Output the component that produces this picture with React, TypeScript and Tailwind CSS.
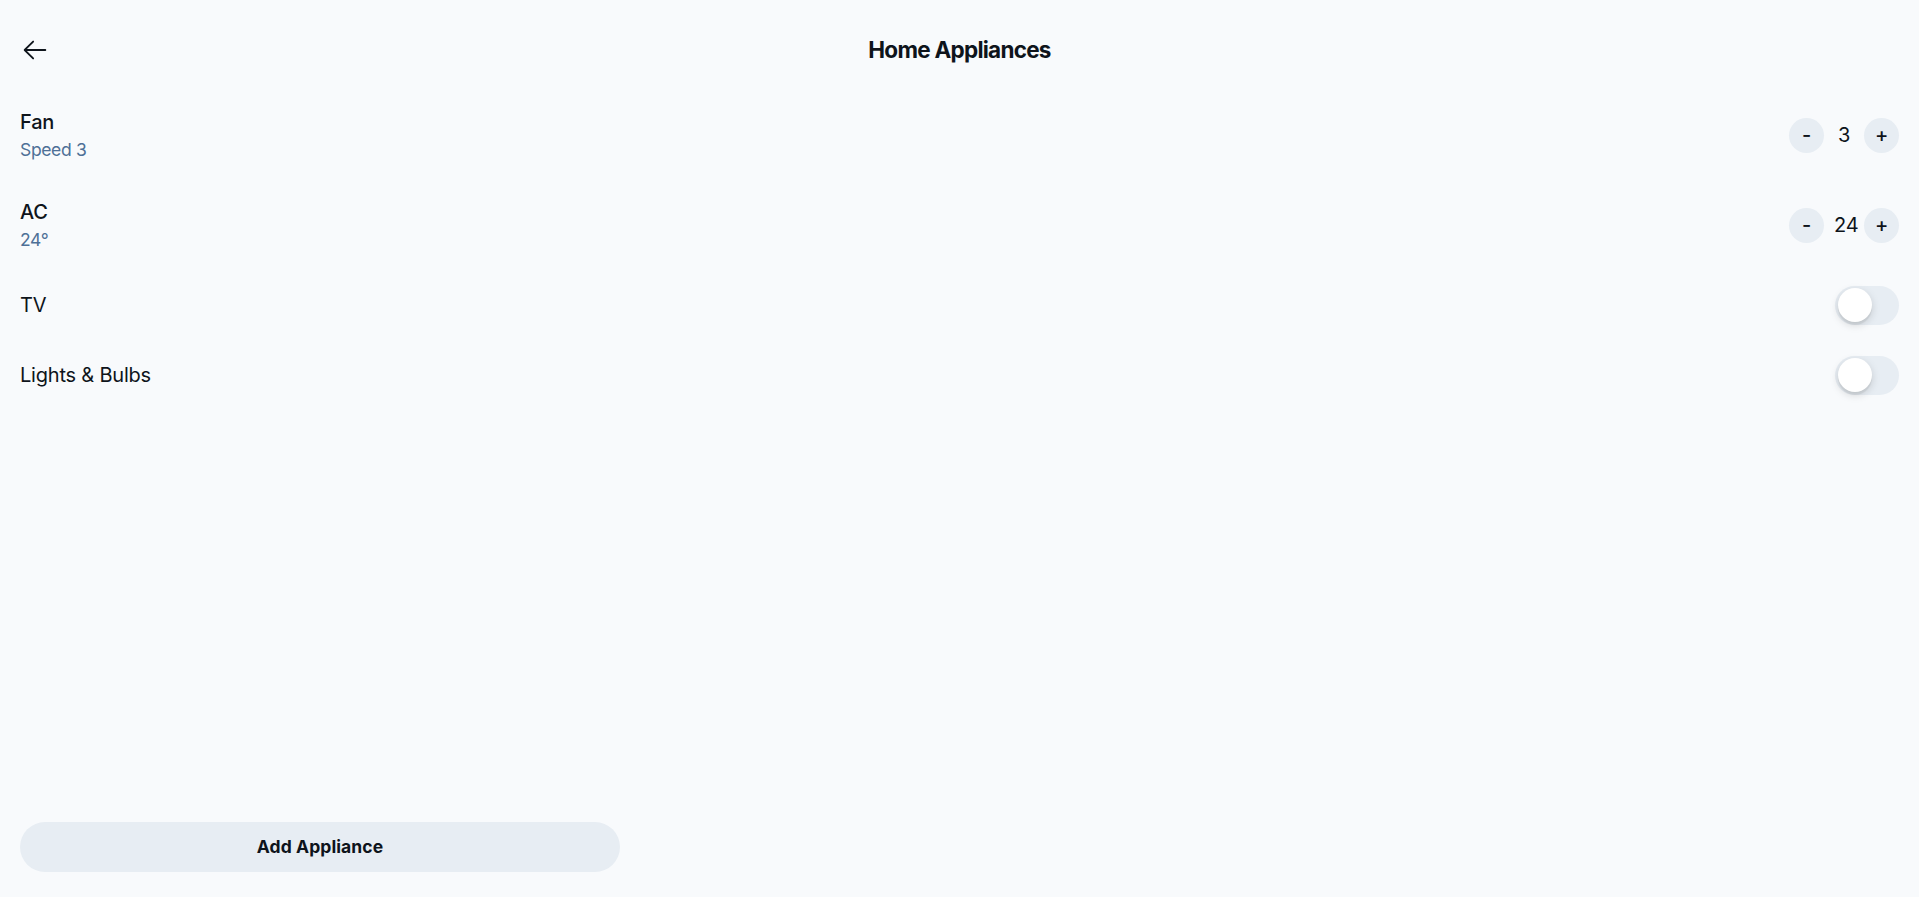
import { useState } from "react";

type Stepper = { kind: "stepper"; name: string; detail: string; value: number };
type Toggle = { kind: "toggle"; name: string; on: boolean };
type Appliance = Stepper | Toggle;

const initial: Appliance[] = [
  { kind: "stepper", name: "Fan", detail: "Speed 3", value: 3 },
  { kind: "stepper", name: "AC", detail: "24°", value: 24 },
  { kind: "toggle", name: "TV", on: false },
  { kind: "toggle", name: "Lights & Bulbs", on: false },
];

function ArrowLeft() {
  return (
    <svg width="30" height="30" viewBox="0 0 256 256" fill="currentColor">
      <path d="M224,128a8,8,0,0,1-8,8H59.31l58.35,58.34a8,8,0,0,1-11.32,11.32l-72-72a8,8,0,0,1,0-11.32l72-72a8,8,0,0,1,11.32,11.32L59.31,120H216A8,8,0,0,1,224,128Z" />
    </svg>
  );
}

function StepButton({ label, onClick }: { label: string; onClick: () => void }) {
  return (
    <button
      onClick={onClick}
      className="flex h-[35px] w-[35px] items-center justify-center rounded-full bg-[#e7edf3] text-[20px] font-medium leading-normal text-[#0e141b]"
    >
      {label}
    </button>
  );
}

function Switch({ on, onChange }: { on: boolean; onChange: () => void }) {
  return (
    <button
      onClick={onChange}
      className={`flex h-[39px] w-[64px] items-center rounded-full p-[2.5px] ${
        on ? "justify-end bg-[#1978e5]" : "justify-start bg-[#e7edf3]"
      }`}
    >
      <span className="h-full w-[34px] rounded-full bg-white shadow-[0_3px_8px_rgba(0,0,0,0.15),0_3px_1px_rgba(0,0,0,0.06)]" />
    </button>
  );
}

export default function App() {
  const [items, setItems] = useState<Appliance[]>(initial);

  const update = (i: number, fn: (a: Appliance) => Appliance) =>
    setItems((prev) => prev.map((a, j) => (j === i ? fn(a) : a)));

  return (
    <div className="flex min-h-screen flex-col justify-between bg-[#f8fafc] font-['Inter',sans-serif] tracking-[-0.013em] text-[#0e141b]">
      <div>
        <div className="flex items-center justify-between p-[20px] pb-[10px]">
          <div className="flex h-[60px] w-[60px] shrink-0 items-center text-[#0e141b]">
            <ArrowLeft />
          </div>
          <h2 className="flex-1 pr-[60px] text-center text-[22.5px] font-bold leading-tight tracking-[-0.033em]">
            Home Appliances
          </h2>
        </div>

        {items.map((a, i) =>
          a.kind === "stepper" ? (
            <div
              key={a.name}
              className="flex min-h-[90px] items-center justify-between gap-[20px] px-[20px] py-[10px]"
            >
              <div className="flex flex-col justify-center">
                <p className="text-[20px] font-medium leading-normal">{a.name}</p>
                <p className="text-[17.5px] font-normal leading-normal tracking-[-0.02em] text-[#4e7097]">
                  {a.detail}
                </p>
              </div>
              <div className="flex items-center gap-[10px]">
                <StepButton
                  label="-"
                  onClick={() => update(i, (x) => (x.kind === "stepper" ? { ...x, value: x.value - 1 } : x))}
                />
                <span className="w-[20px] text-center text-[20px] font-normal leading-normal">
                  {a.value}
                </span>
                <StepButton
                  label="+"
                  onClick={() => update(i, (x) => (x.kind === "stepper" ? { ...x, value: x.value + 1 } : x))}
                />
              </div>
            </div>
          ) : (
            <div
              key={a.name}
              className="flex min-h-[70px] items-center justify-between gap-[20px] px-[20px]"
            >
              <p className="flex-1 truncate text-[20px] font-normal leading-normal">{a.name}</p>
              <Switch
                on={a.on}
                onChange={() => update(i, (x) => (x.kind === "toggle" ? { ...x, on: !x.on } : x))}
              />
            </div>
          )
        )}
      </div>

      <div className="px-[20px] pb-[25px] pt-[15px]">
        <button className="flex h-[50px] w-full max-w-[600px] items-center justify-center rounded-full bg-[#e7edf3] px-[20px] text-[17.5px] font-bold tracking-[0.005em] text-[#0e141b]">
          Add Appliance
        </button>
      </div>
    </div>
  );
}
